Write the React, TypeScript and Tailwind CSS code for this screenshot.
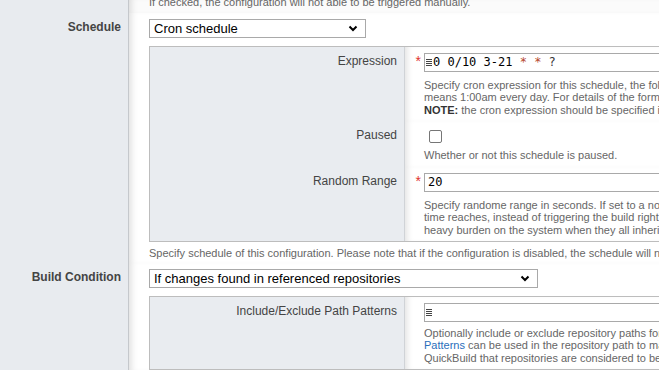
import React from 'react';

const helpCls = 'text-[11px] leading-[12.5px] text-[#666] whitespace-nowrap';

function Chevron() {
  return (
    <svg width="10" height="7" viewBox="0 0 10 7" className="shrink-0">
      <path d="M1.5 1.5 L5 5 L8.5 1.5" fill="none" stroke="#000" strokeWidth="2" />
    </svg>
  );
}

function LinesIcon() {
  return (
    <svg width="6" height="7" viewBox="0 0 6 7" className="mr-[1px] shrink-0">
      {[0.5, 2.5, 4.5, 6.5].map((y) => (
        <line key={y} x1="0" x2="6" y1={y} y2={y} stroke="#444" strokeWidth="1" />
      ))}
    </svg>
  );
}

function Select({ value, width }: { value: string; width: string }) {
  return (
    <div
      className={`flex h-[19px] items-center justify-between border border-[#a9a9a9] bg-white pl-[4px] pr-[7px] text-[13px] leading-[17px] text-black ${width}`}
    >
      <span>{value}</span>
      <Chevron />
    </div>
  );
}

function TextInput({ required, children }: { required?: boolean; children: React.ReactNode }) {
  return (
    <div className="relative">
      {required && (
        <span className="absolute right-full top-[1px] mr-[3px] text-[14px] leading-[14px] text-[#e0332f]">*</span>
      )}
      <div className="flex h-[19px] w-[400px] items-center whitespace-pre border border-[#a9a9a9] bg-white pl-[1px] font-['DejaVu_Sans_Mono',monospace] text-[12px] text-black">
        {children}
      </div>
    </div>
  );
}

function PanelRow({ label, children }: { label: string; children: React.ReactNode }) {
  return (
    <div className="flex">
      <div className="w-[255px] shrink-0 border-r border-[#d0d3d7] bg-[#e9ecf0] pr-[7px] pt-[7px] text-right text-[12px] leading-[14px] text-[#444]">
        {label}
      </div>
      <div className="min-w-0 flex-1 bg-white pb-[5px] pl-[19px] pt-[6px] shadow-[inset_6px_0_6px_-4px_rgba(0,0,0,0.12)]">
        {children}
      </div>
    </div>
  );
}

function FormRow({ label, children, grow }: { label?: string; children: React.ReactNode; grow?: boolean }) {
  return (
    <div className={`flex ${grow ? 'flex-1' : ''}`}>
      <div className="w-[129px] shrink-0 border-r border-[#c5c8cc] bg-[#e8ebef] pr-[7px] pt-[7px] text-right text-[12px] font-bold leading-[14px] text-[#444]">
        {label}
      </div>
      <div className="min-w-0 flex-1 bg-white pl-[20px] shadow-[inset_7px_0_7px_-5px_rgba(0,0,0,0.14)]">
        {children}
      </div>
    </div>
  );
}

export default function App() {
  return (
    <div className="flex h-[370px] w-[659px] flex-col overflow-hidden bg-white font-['Liberation_Sans',Arial,sans-serif]">
      {/* tail of the previous field */}
      <div className="flex h-[15px]">
        <div className="w-[129px] shrink-0 border-r border-[#c5c8cc] bg-[#e8ebef]" />
        <div className="min-w-0 flex-1 bg-[#fbfbfb] pl-[20px] shadow-[inset_7px_0_7px_-5px_rgba(0,0,0,0.14)]">
          <div className={`${helpCls} -mt-[4px]`}>
            If checked, the configuration will not able to be triggered manually.
          </div>
        </div>
      </div>

      <FormRow label="Schedule">
        <div className="pb-[3px] pt-[6px]">
          <Select value="Cron schedule" width="w-[217px]" />
          <div className="mt-[8px] w-[560px] border border-[#bdbdbd]">
            <PanelRow label="Expression">
              <TextInput required>
                <LinesIcon />
                <span>0 0/10 3-21 </span>
                <span className="text-[#b5452b]">* * </span>
                <span className="text-[#333]">?</span>
              </TextInput>
              <div className={`${helpCls} mt-[7px]`}>
                <div>Specify cron expression for this schedule, the following expression "0 0 1 * * ?" for example</div>
                <div>means 1:00am every day. For details of the format, please refer to the cron trigger tutorial.</div>
                <div>
                  <b className="text-[#333]">NOTE:</b> the cron expression should be specified in the time zone of the server.
                </div>
              </div>
            </PanelRow>
            <PanelRow label="Paused">
              <div className="flex h-[19px] items-center">
                <div className="ml-[5px] h-[13px] w-[13px] rounded-[2px] border border-[#767676] bg-white" />
              </div>
              <div className={`${helpCls} mt-[3px]`}>Whether or not this schedule is paused.</div>
            </PanelRow>
            <PanelRow label="Random Range">
              <TextInput required>
                <span className="pl-[2px]">20</span>
              </TextInput>
              <div className={`${helpCls} mt-[7px]`}>
                <div>Specify randome range in seconds. If set to a non-zero value, when the scheduled</div>
                <div>time reaches, instead of triggering the build right away, a random delay is added to avoid</div>
                <div>heavy burden on the system when they all inherit the same schedule.</div>
              </div>
            </PanelRow>
          </div>
          <div className={`${helpCls} mt-[5px]`}>
            Specify schedule of this configuration. Please note that if the configuration is disabled, the schedule will not take effect.
          </div>
        </div>
      </FormRow>

      <FormRow label="Build Condition" grow>
        <div className="pt-[6px]">
          <Select value="If changes found in referenced repositories" width="w-[389px]" />
          <div className="mt-[8px] w-[560px] border border-[#bdbdbd]">
            <PanelRow label="Include/Exclude Path Patterns">
              <TextInput>
                <LinesIcon />
              </TextInput>
              <div className={`${helpCls} mt-[5px]`}>
                <div>Optionally include or exclude repository paths for change detection.</div>
                <div>
                  <span className="text-[#2a6ebb]">Patterns</span> can be used in the repository path to match multiple paths.
                </div>
                <div>QuickBuild that repositories are considered to be changed only if matched paths changed.</div>
              </div>
            </PanelRow>
          </div>
        </div>
      </FormRow>
    </div>
  );
}
